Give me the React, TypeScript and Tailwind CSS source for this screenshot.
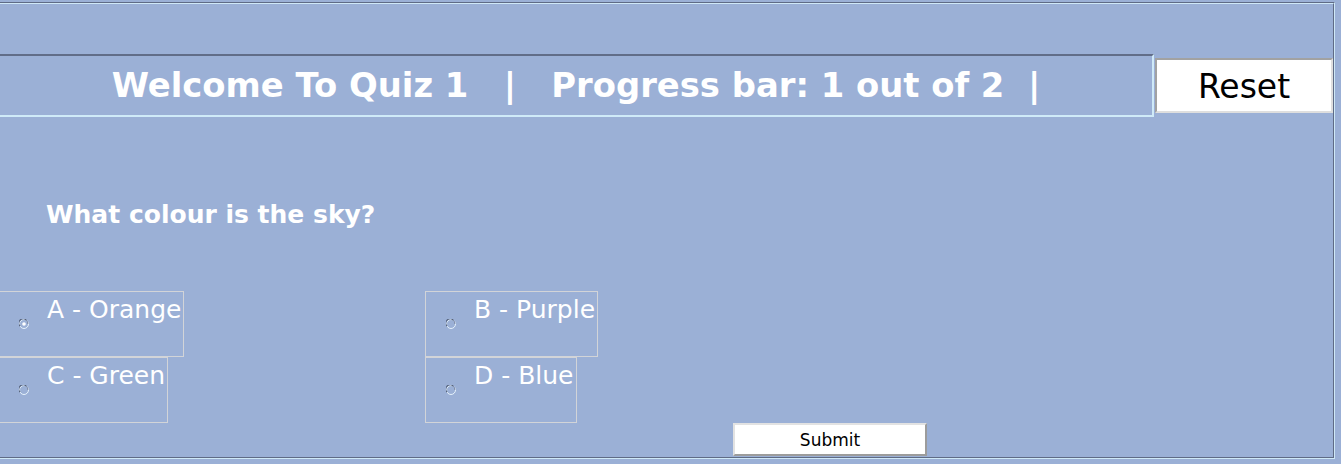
import React from 'react'

const font = { fontFamily: '"DejaVu Sans", Verdana, sans-serif' }

function Radio({ checked }: { checked?: boolean }) {
  return (
    <svg width="10" height="10" viewBox="0 0 10 10" className="shrink-0">
      <circle cx="5" cy="5" r="4.5" fill="none" stroke="#e6f2fb" strokeWidth="1" />
      <path d="M1.1 7.2 A4.2 4.2 0 0 1 7.2 1.1" fill="none" stroke="#56627c" strokeWidth="1.2" />
      <path d="M7.2 1.1 A4.2 4.2 0 0 1 8.9 5" fill="none" stroke="#7884a0" strokeWidth="1" />
      {checked && <circle cx="5" cy="5" r="1.8" fill="#ffffff" />}
    </svg>
  )
}

function Option({ label, checked }: { label: string; checked?: boolean }) {
  return (
    <div className="flex h-[66px] w-fit items-center border border-[#d2d4d8] pr-[2px] pl-[20px]">
      <Radio checked={checked} />
      <span className="ml-[18px] self-start pt-[3px] text-[25px] leading-[29px] whitespace-pre text-white">
        {label}
      </span>
    </div>
  )
}

export default function App() {
  return (
    <div className="h-[464px] w-[1341px] overflow-hidden bg-[#9bb0d6]" style={font}>
      <div className="mt-[2px] ml-[-4px] h-[457px] w-[1339px] border-t border-r border-b border-l border-t-[#5f6b85] border-r-[#cfe8f7] border-b-[#cfe8f7] border-l-[#5f6b85]">
        <div className="h-full w-full border-t border-r border-b border-l border-t-[#cfe8f7] border-r-[#5f6b85] border-b-[#5f6b85] border-l-[#cfe8f7]">
          <div className="mt-[50px] flex items-start">
            <div className="flex h-[63px] w-[1156px] items-center justify-center border-2 border-t-[#616d88] border-r-[#cfeaf8] border-b-[#cfeaf8] border-l-[#616d88] pt-[2px]">
              <span className="text-[33.8px] font-bold whitespace-pre text-white">
                {'Welcome To Quiz 1   |   Progress bar: 1 out of 2  |'}
              </span>
            </div>
            <button className="mt-[4px] ml-[1px] flex h-[55px] w-[178px] items-center justify-center border-2 border-t-[#a2a2a2] border-r-[#dedede] border-b-[#dedede] border-l-[#a2a2a2] bg-white pt-[3px] text-[33px] text-black">
              Reset
            </button>
          </div>

          <p className="mt-[83px] ml-[48px] text-[25px] leading-[29px] font-bold text-white">
            What colour is the sky?
          </p>

          <div className="mt-[62px] flex">
            <div className="flex w-[427px] flex-col">
              <Option label="A - Orange" checked />
              <Option label="C - Green" />
            </div>
            <div className="flex flex-col">
              <Option label="B - Purple" />
              <Option label="D - Blue" />
            </div>
          </div>

          <button className="ml-[735px] flex h-[33px] w-[194px] items-center justify-center border-2 border-t-[#e2e2e2] border-r-[#9c9c9c] border-b-[#9c9c9c] border-l-[#e2e2e2] bg-white pt-[3px] text-[17px] text-black">
            Submit
          </button>
        </div>
      </div>
    </div>
  )
}
